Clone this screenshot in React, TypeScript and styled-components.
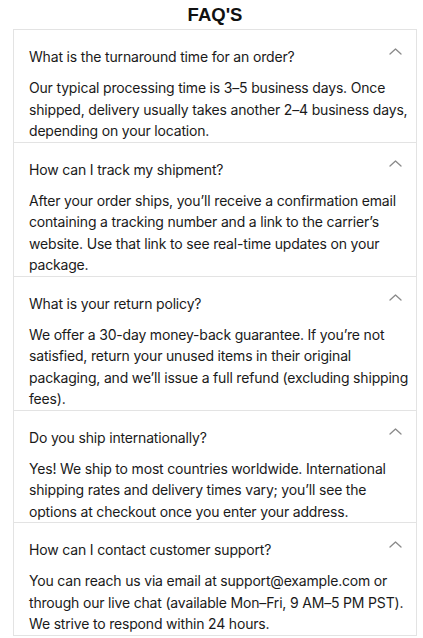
import React from "react";
import styled, { createGlobalStyle } from "styled-components";

const Global = createGlobalStyle`
  html, body { margin: 0; padding: 0; background: #fff; }
  body { font-family: Inter, "Noto Sans", sans-serif; color: #1a1a1a; }
`;

const Page = styled.div`
  padding: 5px 6px 0 13px;
`;

const Title = styled.h1`
  margin: 0 0 4px;
  text-align: center;
  font-family: "Liberation Sans", Arial, sans-serif;
  font-weight: 700;
  font-size: 18.5px;
  line-height: 20px;
  color: #111;
`;

const List = styled.div`
  border: 1px solid #e3e3e3;
  border-bottom: none;
`;

const Item = styled.section`
  border-bottom: 1px solid #e3e3e3;
  padding: 16px 4px 0 15px;
`;

const Header = styled.div`
  display: flex;
  align-items: center;
  justify-content: space-between;
`;

const Question = styled.div`
  font-size: 14px;
  line-height: 21px;
  letter-spacing: -0.17px;
  color: #1a1a1a;
`;

const Chevron = styled.svg`
  width: 13px;
  height: 7px;
  margin-right: 10px;
  margin-top: -11px;
  color: #8a8a8a;
`;

const Answer = styled.p`
  margin: 10px 0 0;
  font-size: 14px;
  line-height: 21.5px;
  letter-spacing: -0.18px;
  color: #1a1a1a;
`;

const faqs = [
  {
    q: "What is the turnaround time for an order?",
    a: "Our typical processing time is 3–5 business days. Once shipped, delivery usually takes another 2–4 business days, depending on your location.",
  },
  {
    q: "How can I track my shipment?",
    a: "After your order ships, you’ll receive a confirmation email containing a tracking number and a link to the carrier’s website. Use that link to see real-time updates on your package.",
  },
  {
    q: "What is your return policy?",
    a: "We offer a 30-day money-back guarantee. If you’re not satisfied, return your unused items in their original packaging, and we’ll issue a full refund (excluding shipping fees).",
  },
  {
    q: "Do you ship internationally?",
    a: "Yes! We ship to most countries worldwide. International shipping rates and delivery times vary; you’ll see the options at checkout once you enter your address.",
  },
  {
    q: "How can I contact customer support?",
    a: "You can reach us via email at support@example.com or through our live chat (available Mon–Fri, 9 AM–5 PM PST). We strive to respond within 24 hours.",
  },
];

export default function App() {
  return (
    <Page>
      <Global />
      <Title>FAQ'S</Title>
      <List>
        {faqs.map((f) => (
          <Item key={f.q}>
            <Header>
              <Question>{f.q}</Question>
              <Chevron viewBox="0 0 13 7" fill="none" stroke="currentColor" strokeWidth={1.3} strokeLinecap="round" strokeLinejoin="round">
                <path d="M1 6l5.5-5 5.5 5" />
              </Chevron>
            </Header>
            <Answer>{f.a}</Answer>
          </Item>
        ))}
      </List>
    </Page>
  );
}
